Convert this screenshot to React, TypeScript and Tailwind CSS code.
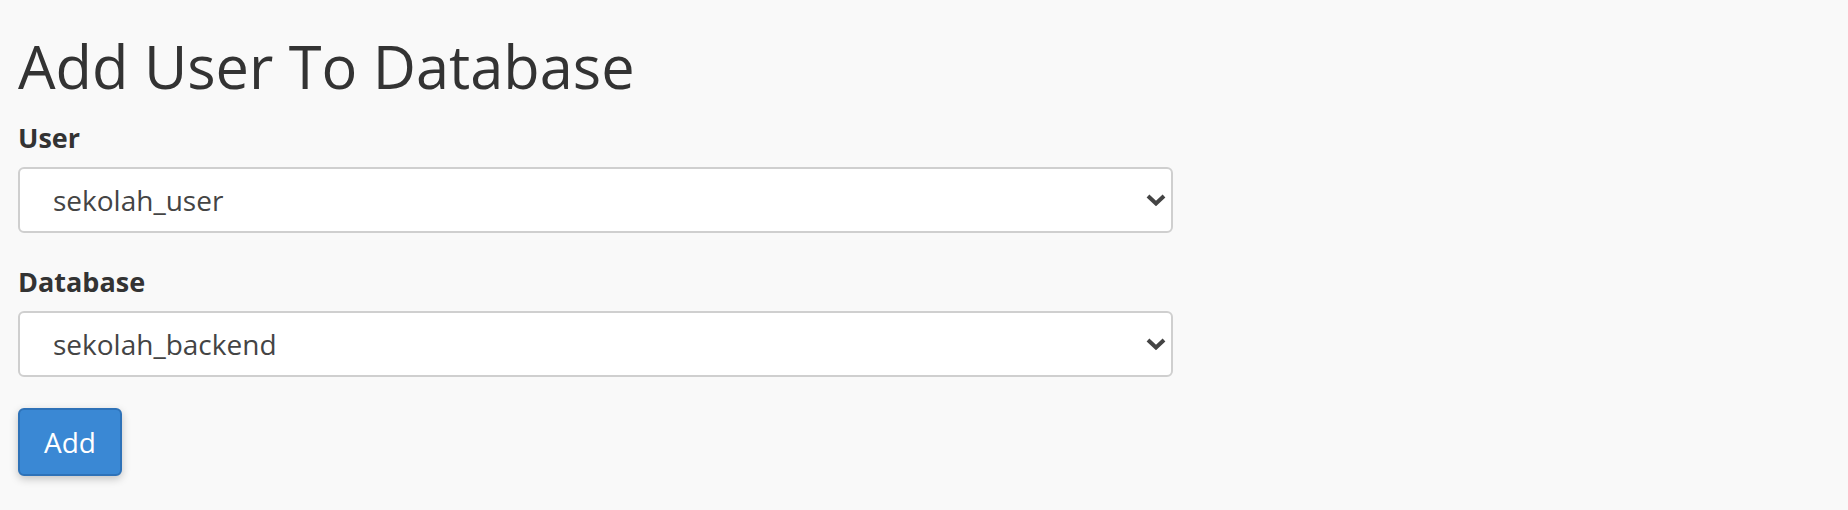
import React from "react";

const Chevron = () => (
  <svg
    width="20"
    height="13"
    viewBox="0 0 20 13"
    className="pointer-events-none absolute right-[7px] top-1/2 -translate-y-1/2"
  >
    <polyline points="2,2.5 10,10 18,2.5" fill="none" stroke="#444" strokeWidth="4" />
  </svg>
);

const SelectField = ({ label, value, options }: { label: string; value: string; options: string[] }) => (
  <div className="flex flex-col">
    <label className="text-[27px] font-bold leading-[36px] text-[#333]">{label}</label>
    <div className="relative mt-[11px] w-[1155px]">
      <select
        defaultValue={value}
        className="h-[66px] w-full appearance-none rounded-[6px] border-2 border-[#cfcfcf] bg-white pl-[33px] pr-[40px] text-[28px] text-[#444] outline-none"
      >
        {options.map((o) => (
          <option key={o} value={o}>
            {o}
          </option>
        ))}
      </select>
      <Chevron />
    </div>
  </div>
);

const App = () => {
  return (
    <div
      className="h-[510px] w-full bg-[#f9f9f9] pl-[18px]"
      style={{ fontFamily: '"Open Sans", "Noto Sans", sans-serif' }}
    >
      <h1 className="pt-[33px] text-[59.5px] font-normal leading-[66px] text-[#333]">Add User To Database</h1>

      <div className="mt-[21px] flex flex-col gap-[31px]">
        <SelectField label="User" value="sekolah_user" options={["sekolah_user"]} />
        <SelectField label="Database" value="sekolah_backend" options={["sekolah_backend"]} />
      </div>

      <button className="mt-[31px] h-[68px] w-[104px] rounded-[6px] border-2 border-[#2e72b8] bg-[#3a88d4] text-[28px] text-white shadow-[0_3px_8px_rgba(0,0,0,0.22)]">
        Add
      </button>
    </div>
  );
};

export default App;
